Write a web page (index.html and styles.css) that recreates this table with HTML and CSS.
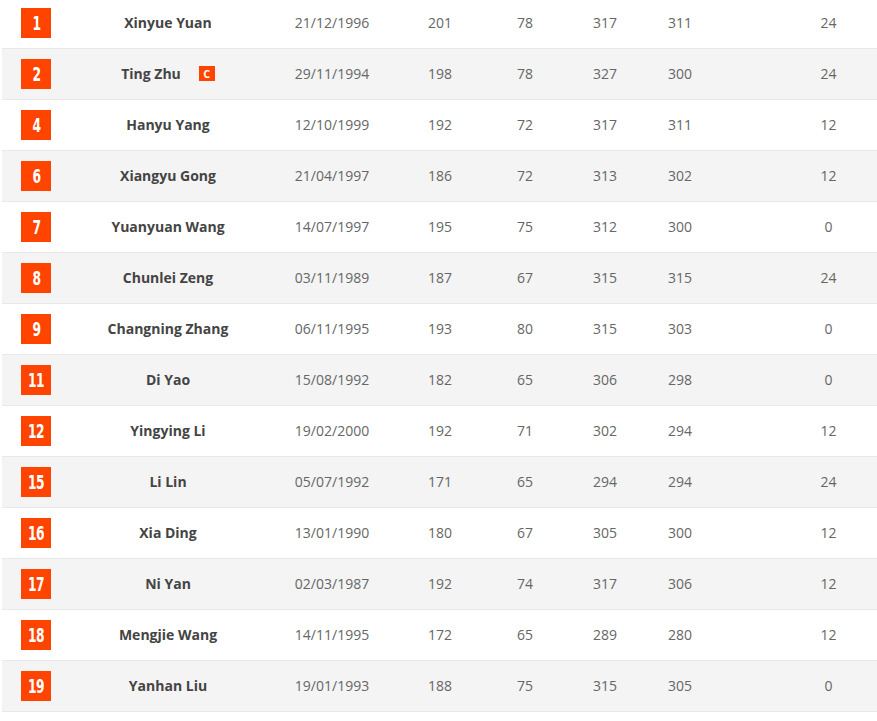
FILE: index.html
```html
<!DOCTYPE html>
<html>
<head>
<meta charset="utf-8">
<link rel="stylesheet" href="styles.css">
</head>
<body>
<div class="roster">
  <div class="row"><div class="c-num"><span class="num"><span>1</span></span></div><div class="c-name">Xinyue Yuan</div><div class="c-date">21/12/1996</div><div>201</div><div>78</div><div>317</div><div>311</div><div></div><div>24</div></div>
  <div class="row"><div class="c-num"><span class="num"><span>2</span></span></div><div class="c-name">Ting Zhu<span class="cap">C</span></div><div class="c-date">29/11/1994</div><div>198</div><div>78</div><div>327</div><div>300</div><div></div><div>24</div></div>
  <div class="row"><div class="c-num"><span class="num"><span>4</span></span></div><div class="c-name">Hanyu Yang</div><div class="c-date">12/10/1999</div><div>192</div><div>72</div><div>317</div><div>311</div><div></div><div>12</div></div>
  <div class="row"><div class="c-num"><span class="num"><span>6</span></span></div><div class="c-name">Xiangyu Gong</div><div class="c-date">21/04/1997</div><div>186</div><div>72</div><div>313</div><div>302</div><div></div><div>12</div></div>
  <div class="row"><div class="c-num"><span class="num"><span>7</span></span></div><div class="c-name">Yuanyuan Wang</div><div class="c-date">14/07/1997</div><div>195</div><div>75</div><div>312</div><div>300</div><div></div><div>0</div></div>
  <div class="row"><div class="c-num"><span class="num"><span>8</span></span></div><div class="c-name">Chunlei Zeng</div><div class="c-date">03/11/1989</div><div>187</div><div>67</div><div>315</div><div>315</div><div></div><div>24</div></div>
  <div class="row"><div class="c-num"><span class="num"><span>9</span></span></div><div class="c-name">Changning Zhang</div><div class="c-date">06/11/1995</div><div>193</div><div>80</div><div>315</div><div>303</div><div></div><div>0</div></div>
  <div class="row"><div class="c-num"><span class="num"><span>11</span></span></div><div class="c-name">Di Yao</div><div class="c-date">15/08/1992</div><div>182</div><div>65</div><div>306</div><div>298</div><div></div><div>0</div></div>
  <div class="row"><div class="c-num"><span class="num"><span>12</span></span></div><div class="c-name">Yingying Li</div><div class="c-date">19/02/2000</div><div>192</div><div>71</div><div>302</div><div>294</div><div></div><div>12</div></div>
  <div class="row"><div class="c-num"><span class="num"><span>15</span></span></div><div class="c-name">Li Lin</div><div class="c-date">05/07/1992</div><div>171</div><div>65</div><div>294</div><div>294</div><div></div><div>24</div></div>
  <div class="row"><div class="c-num"><span class="num"><span>16</span></span></div><div class="c-name">Xia Ding</div><div class="c-date">13/01/1990</div><div>180</div><div>67</div><div>305</div><div>300</div><div></div><div>12</div></div>
  <div class="row"><div class="c-num"><span class="num"><span>17</span></span></div><div class="c-name">Ni Yan</div><div class="c-date">02/03/1987</div><div>192</div><div>74</div><div>317</div><div>306</div><div></div><div>12</div></div>
  <div class="row"><div class="c-num"><span class="num"><span>18</span></span></div><div class="c-name">Mengjie Wang</div><div class="c-date">14/11/1995</div><div>172</div><div>65</div><div>289</div><div>280</div><div></div><div>12</div></div>
  <div class="row"><div class="c-num"><span class="num"><span>19</span></span></div><div class="c-name">Yanhan Liu</div><div class="c-date">19/01/1993</div><div>188</div><div>75</div><div>315</div><div>305</div><div></div><div>0</div></div>
</div>
</body>
</html>
```
FILE: styles.css
```css
html, body {
  margin: 0;
  padding: 0;
  background: #fff;
}
body {
  font-family: "Open Sans", "Liberation Sans", sans-serif;
  font-size: 14px;
  color: #666;
}
.roster {
  margin: -2px 0 0 2px;
}
.row {
  display: grid;
  grid-template-columns: 68px 196px 132px 84px 86px 74px 76px 62px 97px;
  align-items: center;
  height: 50px;
  border-bottom: 1px solid #e8e8e8;
  text-align: center;
}
.row > div:not(.c-num) {
  margin-bottom: 2px;
}
.row:nth-child(even) {
  background: #f4f4f4;
}
.c-num {
  display: flex;
  justify-content: center;
}
.num {
  display: flex;
  align-items: center;
  justify-content: center;
  width: 30px;
  height: 30px;
  background: #ff4400;
  color: #fff;
  font-family: "DejaVu Sans", sans-serif;
  font-stretch: condensed;
  font-weight: bold;
  font-size: 19px;
  letter-spacing: -1px;
}
.num span {
  display: inline-block;
  transform: scaleX(0.72);
}
.c-name {
  font-weight: 700;
  color: #444;
  display: flex;
  justify-content: center;
  align-items: center;
}
.cap {
  display: inline-flex;
  align-items: center;
  justify-content: center;
  width: 16px;
  height: 15px;
  margin-left: 18px;
  background: #ff4400;
  color: #fff;
  font-size: 11px;
  font-weight: 700;
  line-height: 1;
}
```
